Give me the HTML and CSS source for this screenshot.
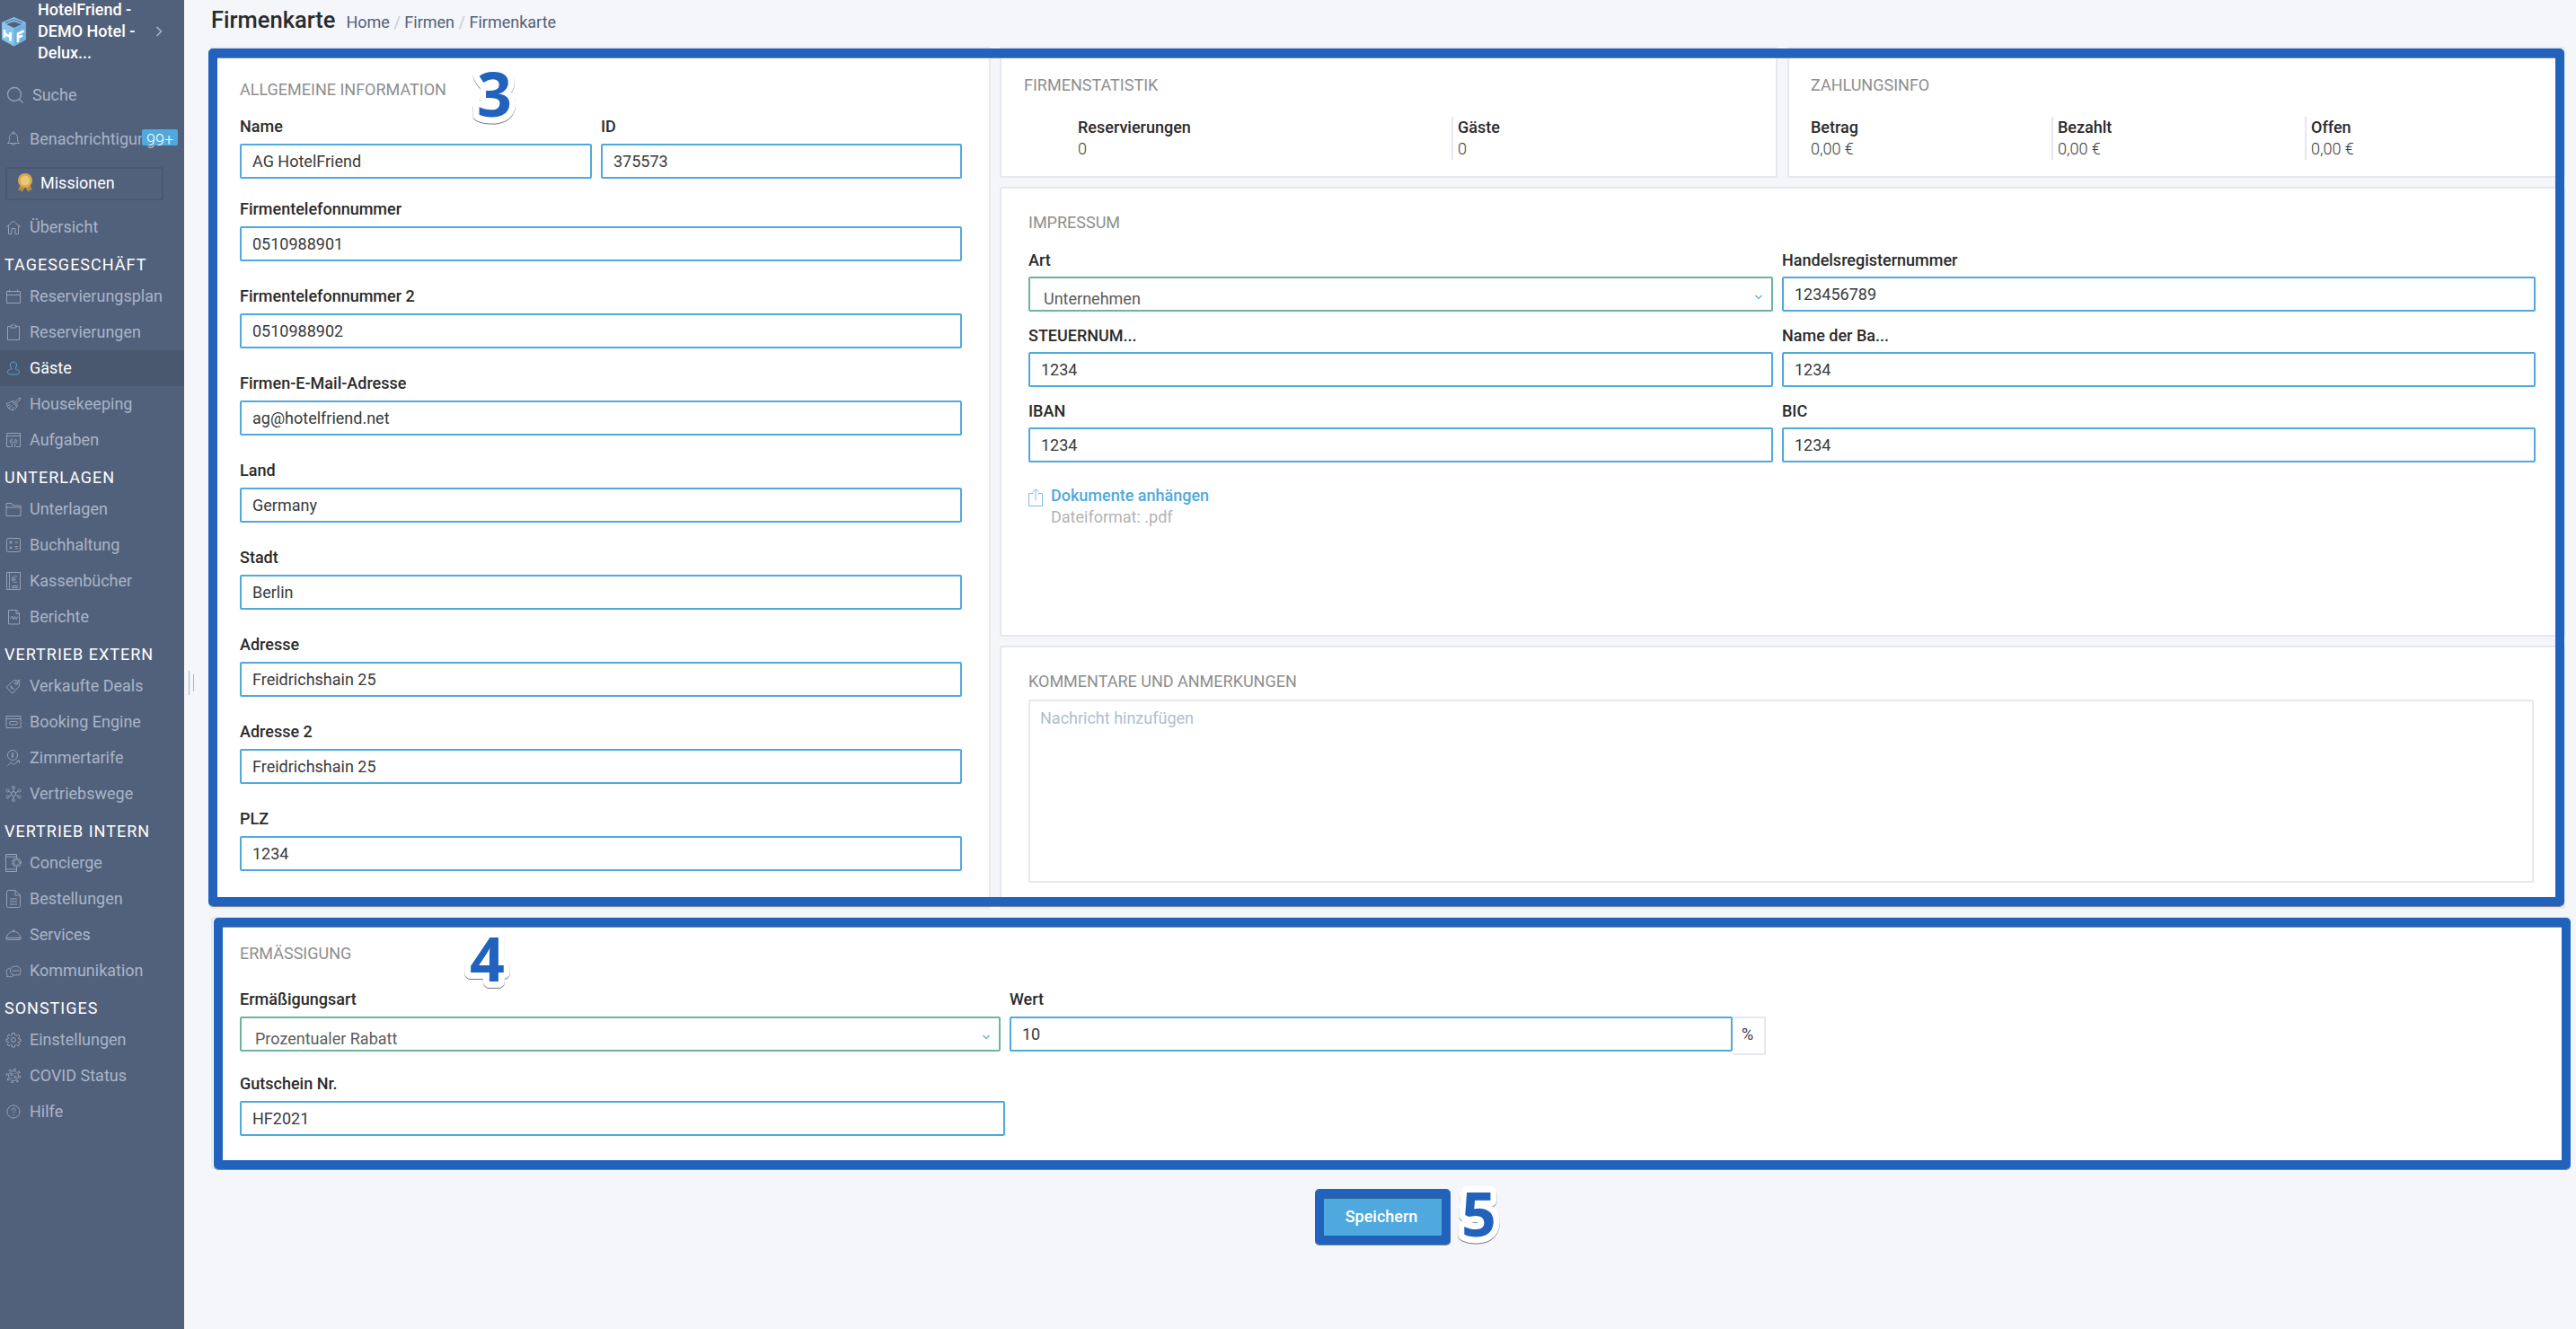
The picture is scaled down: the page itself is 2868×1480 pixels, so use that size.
FILE: index.html
```html
<!DOCTYPE html>
<html lang="de">
<head>
    <meta charset="UTF-8">
    <meta name="viewport" content="width=device-width, initial-scale=1.0">
    <title>Firmenkarte</title>
    <link rel="stylesheet" href="styles.css">
</head>
<body>
<div class="app">
    <!-- Sidebar -->
    <nav class="sidebar">
        <div class="hotel">
            <svg class="logo" width="29" height="33" viewBox="0 0 29 33">
                <path fill="#86c5ee" d="M14.500 0 28 6v19l-13.500 7.500L1 25V6z"/>
                <path fill="#70b2dd" d="M14.500 12.500 28 6v19l-13.500 7.500z"/>
                <path fill="#52617b" d="M14.500 5 23 8l-8.500 4L6 8z"/>
                <path fill="none" stroke="#52617b" d="M5 6.500 14.500 2.500 24 6.500"/>
                <path fill="none" stroke="#fff" stroke-width="2.600" d="M4 14v9M10.500 17v10M4 18.500l6.500 3.500M19 28V18.500l6.500-3M19 23l5-2.500"/>
            </svg>
            <div class="hotel-name">HotelFriend - DEMO Hotel - Delux...</div>
            <svg class="hotel-arrow" width="8" height="12" viewBox="0 0 8 12"><path d="M1.500 1l5 5-5 5"/></svg>
        </div>
        <a class="item search">
            <svg class="ico" viewBox="0 0 20 20"><circle cx="9" cy="9" r="7.500"/><path d="M14.500 14.500l4 4"/></svg>
            Suche
        </a>
        <a class="item notify">
            <svg class="ico" viewBox="0 0 20 20"><path d="M3.500 14.500h13c-2-1.500-2-3-2-6C14.500 5.500 13 3.500 10 3.500S5.500 5.500 5.500 8.500c0 3 0 4.500-2 6zM8.500 3.500c0-2.500 3-2.500 3 0M8 14.500c0 2.500 4 2.500 4 0"/></svg>
            Benachrichtigungen
            <span class="badge">99+</span>
        </a>
        <a class="missions">
            <svg width="18" height="21" viewBox="0 0 18 21">
                <path fill="#b98d45" d="M4 12 1 19l3-.500L5.500 21 9 15l3.500 6 1.500-2.500 3 .500-3-7z"/>
                <circle cx="9" cy="8" r="8" fill="#d9a950"/>
                <circle cx="9" cy="8" r="5.200" fill="#edc873"/>
            </svg>
            Missionen
        </a>
        <a class="item">
            <svg class="ico" viewBox="0 0 20 20"><path d="M2 10l8-7 8 7M4.500 8v9.500h3.500v-6h4v6h3.500V8"/></svg>
            Übersicht
        </a>

        <div class="group">Tagesgeschäft</div>
        <a class="item">
            <svg class="ico" viewBox="0 0 20 20"><path d="M2.500 4.500h15v13h-15zM2.500 8.500h15M5.500 2.500v3M14.500 2.500v3"/></svg>
            Reservierungsplan
        </a>
        <a class="item">
            <svg class="ico" viewBox="0 0 20 20"><path d="M7 3.500H3.500v15h13v-15H13M7 2.500h1.500c0-2 3-2 3 0H13v2.500H7z"/></svg>
            Reservierungen
        </a>
        <a class="item active">
            <svg class="ico" viewBox="0 0 20 20"><path d="M8 10C5.500 8 6 3 10 3s4.500 5 2 7c0 2 4.500 1 4.500 4.500 0 2-2.500 2.500-6.500 2.500s-6.500-.500-6.500-2.500C3.500 11 8 12 8 10z"/></svg>
            Gäste
        </a>
        <a class="item">
            <svg class="ico" viewBox="0 0 20 20"><path d="M9.500 6l5 5M8 7l5.500 5.500M9.500 6C7 8 4.500 9 2.500 9c0 3.500 2 7 6.500 8 2.500-.500 4.500-3 5.500-6M11.500 8l5-5 1.500.500-.500 1.500-4.500 4.500M3.500 12l3-1.500M5 14.500l3.500-3M8 16l2.500-3"/></svg>
            Housekeeping
        </a>
        <a class="item">
            <svg class="ico" viewBox="0 0 20 20"><path d="M7 17.500H2.500v-15h15v15H13M2.500 5.500h15M8.500 18v-3.500C5 13 6 9.500 8 9v3l2 1 2-1V9c2 .500 3 4-.500 5.500V18"/></svg>
            Aufgaben
        </a>

        <div class="group">Unterlagen</div>
        <a class="item">
            <svg class="ico" viewBox="0 0 20 20"><path d="M2 17V3.500h6l1.500 2.500H18v11.500H2zM2 8h16"/></svg>
            Unterlagen
        </a>
        <a class="item">
            <svg class="ico" viewBox="0 0 20 20"><rect x="2.500" y="2.500" width="15" height="15" rx="1"/><path d="M5 7h4M7 5v4M11.500 7H15M5.500 11.500l3 3M8.500 11.500l-3 3M11.500 11.500H15M11.500 14H15"/></svg>
            Buchhaltung
        </a>
        <a class="item">
            <svg class="ico" viewBox="0 0 20 20"><path d="M2.500.500h15v19h-15zM5.500.500v19M14 5c-4-2-5 1-5 3s1.500 5 5 3M8 7h4.500M8 9h4.500M8 15.500h7M8 17.500h7"/></svg>
            Kassenbücher
        </a>
        <a class="item">
            <svg class="ico" viewBox="0 0 20 20"><path d="M4.500 2.500h9l3 3.500v12h-12zM13 2.500V6.500h3.500M6.500 12l2-3 1.500 3.500 1.500-3 1.500 3.500 1.500-3.500"/></svg>
            Berichte
        </a>

        <div class="group">Vertrieb extern</div>
        <a class="item">
            <svg class="ico" viewBox="0 0 20 20"><path d="M10.500 3.500l5.500.500.500 6-7.500 8L2 11.500zM14 6.500l4-4M6 10.500l5 3M8 9.500v4"/><circle cx="13" cy="7" r="1.500"/></svg>
            Verkaufte Deals
        </a>
        <a class="item">
            <svg class="ico" viewBox="0 0 20 20"><path d="M2 3.500h16v13H2zM2 6.500h16"/><rect x="5.500" y="9.500" width="9" height="3.500" rx="1.700"/></svg>
            Booking Engine
        </a>
        <a class="item">
            <svg class="ico" viewBox="0 0 20 20"><circle cx="9" cy="7" r="5.500"/><path d="M10.500 5.500C8 4 7 6.500 9 7s1.500 3-1.500 1.500M9 4v6M3.500 18.500l4-3.500 3 2.500 5.500-4.500M13.500 13H16.500v3"/></svg>
            Zimmertarife
        </a>
        <a class="item">
            <svg class="ico" viewBox="0 0 20 20"><circle cx="10" cy="10" r="2.500"/><circle cx="10" cy="3" r="1.500"/><circle cx="10" cy="17" r="1.500"/><circle cx="3.500" cy="6.500" r="1.500"/><circle cx="16.500" cy="6.500" r="1.500"/><circle cx="3.500" cy="13.500" r="1.500"/><circle cx="16.500" cy="13.500" r="1.500"/><path d="M10 4.500v3M10 12.500v3M5 7.500l3 1.500M12 9l3-1.500M5 12.500l3-1.500M12 11l3 1.500"/></svg>
            Vertriebswege
        </a>

        <div class="group">Vertrieb intern</div>
        <a class="item">
            <svg class="ico" viewBox="0 0 20 20"><path d="M13.500 5V.500h-12v19h12V15M1.500 3h12M1.500 17h12"/><circle cx="13.500" cy="9.500" r="4.700" stroke-width="1.500" stroke-dasharray="2 1"/><circle cx="13.500" cy="9.500" r="3"/></svg>
            Concierge
        </a>
        <a class="item">
            <svg class="ico" viewBox="0 0 20 20"><path d="M4.500.500H12l5.500 5.500v11.500a2 2 0 0 1-2 2h-11a2 2 0 0 1-2-2v-15a2 2 0 0 1 2-2zM12 .500V6h5.500M6 10h8M6 13h8M6 16h8"/></svg>
            Bestellungen
        </a>
        <a class="item">
            <svg class="ico" viewBox="0 0 20 20"><path d="M2.500 13.500C3 4 17 4 17.500 13.500M1.500 13.500h17l-1 2h-15zM9 6V5h2v1"/></svg>
            Services
        </a>
        <a class="item">
            <svg class="ico" viewBox="0 0 20 20"><path d="M17.500 14.500c-8 1.500-11-1-11-4.500s2.500-5 5.500-5 6 1.500 6 5c0 2-1.500 3-.500 4.500zM6 7c-5 1-4 5-3 7l-.500 2.500c4 .500 6 .500 8-1.500M9 10h7"/></svg>
            Kommunikation
        </a>

        <div class="group">Sonstiges</div>
        <a class="item">
            <svg class="ico" viewBox="0 0 20 20"><circle cx="10" cy="10" r="2.500"/><path d="M8.500 2.500h3v2l2 1 1.500-1.500L17 6l-1.500 1.500 .500 1.500h2v3h-2l-1 1.500L17 15l-2 2-1.500-1.500-2 .500v2h-3v-2l-2-.500L5 17l-2-2 1.500-1.500-.500-1.500H2V9h2l.500-1.500L3 6l2-2 1.500 1.500 2-1z"/></svg>
            Einstellungen
        </a>
        <a class="item">
            <svg class="ico" viewBox="0 0 20 20"><circle cx="10" cy="10" r="5.500"/><circle cx="10" cy="10" r="7.500" stroke-width="1.500" stroke-dasharray="2.500 3.400"/><circle cx="8" cy="8.500" r="1.200"/><circle cx="12" cy="11.500" r="1.200"/><path d="M12 7v1M7.500 12l1 .500"/></svg>
            COVID Status
        </a>
        <a class="item">
            <svg class="ico" viewBox="0 0 20 20"><circle cx="10" cy="10" r="7"/><path d="M8 8.500c0-3 4-3 4-.500 0 1.500-2 1.500-2 3.500M10 13v1.200"/></svg>
            Hilfe
        </a>
    </nav>
    <div class="drag"><span></span><span></span></div>

    <main class="main">
        <header class="head">
            <h1>Firmenkarte</h1>
            <div class="crumbs"><a>Home</a><i>/</i><a>Firmen</a><i>/</i><a>Firmenkarte</a></div>
        </header>

        <div class="cards">
            <section class="card general">
                <h2>Allgemeine Information</h2>
                <div class="pair">
                    <div class="field"><label>Name</label><div class="input">AG HotelFriend</div></div>
                    <div class="field"><label>ID</label><div class="input">375573</div></div>
                </div>
                <div class="field"><label>Firmentelefonnummer</label><div class="input">0510988901</div></div>
                <div class="field"><label>Firmentelefonnummer 2</label><div class="input">0510988902</div></div>
                <div class="field"><label>Firmen-E-Mail-Adresse</label><div class="input">ag@hotelfriend.net</div></div>
                <div class="field"><label>Land</label><div class="input">Germany</div></div>
                <div class="field"><label>Stadt</label><div class="input">Berlin</div></div>
                <div class="field"><label>Adresse</label><div class="input">Freidrichshain 25</div></div>
                <div class="field"><label>Adresse 2</label><div class="input">Freidrichshain 25</div></div>
                <div class="field"><label>PLZ</label><div class="input">1234</div></div>
            </section>

            <div class="right">
                <div class="stats">
                    <section class="card stat">
                        <h2>Firmenstatistik</h2>
                        <div class="figures guests">
                            <div><b>Reservierungen</b><span>0</span></div>
                            <div><b>Gäste</b><span>0</span></div>
                        </div>
                    </section>
                    <section class="card stat">
                        <h2>Zahlungsinfo</h2>
                        <div class="figures money">
                            <div><b>Betrag</b><span>0,00 €</span></div>
                            <div><b>Bezahlt</b><span>0,00 €</span></div>
                            <div><b>Offen</b><span>0,00 €</span></div>
                        </div>
                    </section>
                </div>

                <section class="card imprint">
                    <h2>Impressum</h2>
                    <div class="grid">
                        <div class="field">
                            <label>Art</label>
                            <div class="input select">Unternehmen<svg class="caret" viewBox="0 0 10 6"><path d="M1.500 1 5 4.500 8.500 1"/></svg></div>
                        </div>
                        <div class="field"><label>Handelsregisternummer</label><div class="input">123456789</div></div>
                        <div class="field"><label>STEUERNUM...</label><div class="input">1234</div></div>
                        <div class="field"><label>Name der Ba...</label><div class="input">1234</div></div>
                        <div class="field"><label>IBAN</label><div class="input">1234</div></div>
                        <div class="field"><label>BIC</label><div class="input">1234</div></div>
                    </div>
                    <div class="attach">
                        <svg width="16" height="20" viewBox="0 0 16 20"><path d="M5.500 5.500h-5v14h15v-14h-5M8 13.500V1M4.500 4 8 .700 11.500 4"/></svg>
                        <div><b>Dokumente anhängen</b><span>Dateiformat: .pdf</span></div>
                    </div>
                </section>

                <section class="card notes">
                    <h2>Kommentare und Anmerkungen</h2>
                    <div class="textarea">Nachricht hinzufügen</div>
                </section>
            </div>
            <div class="frame frame-top"></div>
            <svg class="num num-3" width="60" height="100"><text x="10" y="72">3</text></svg>
        </div>

        <section class="card discount">
            <h2>Ermässigung</h2>
            <div class="row">
                <div class="field kind">
                    <label>Ermäßigungsart</label>
                    <div class="input select">Prozentualer Rabatt<svg class="caret" viewBox="0 0 10 6"><path d="M1.500 1 5 4.500 8.500 1"/></svg></div>
                </div>
                <div class="field value">
                    <label>Wert</label>
                    <div class="addon"><div class="input">10</div><span>%</span></div>
                </div>
            </div>
            <div class="field voucher"><label>Gutschein Nr.</label><div class="input">HF2021</div></div>
            <div class="frame frame-bottom"></div>
            <svg class="num num-4" width="60" height="100"><text x="10" y="72">4</text></svg>
        </section>

        <div class="actions">
            <button class="save">Speichern</button>
            <svg class="num num-5" width="60" height="100"><text x="10" y="72">5</text></svg>
        </div>
    </main>
</div>
</body>
</html>
```
FILE: styles.css
```css
* {
    box-sizing: border-box;
}
body {
    margin: 0;
    background: #f5f6fa;
    font-family: Roboto, "Liberation Sans", sans-serif;
    font-size: 18px;
    line-height: 24px;
    color: #3a3a3a;
}
.app {
    display: flex;
    height: 1480px;
    overflow: hidden;
}

/* sidebar */
.sidebar {
    width: 205px;
    flex: none;
    background: #52617b;
    color: #a9b5c9;
    overflow: hidden;
}
.hotel {
    display: flex;
    align-items: center;
    height: 70px;
    padding-left: 1px;
    color: #fff;
    font-weight: 500;
}
.logo {
    margin-right: 12px;
}
.hotel-name {
    width: 120px;
}
.hotel-arrow {
    margin-left: 11px;
    fill: none;
    stroke: #a9b5c9;
    stroke-width: 1.5;
}
.item {
    display: flex;
    align-items: center;
    height: 40px;
    padding-left: 5px;
    white-space: nowrap;
    position: relative;
}
.ico {
    width: 20px;
    height: 20px;
    flex: none;
    margin-right: 8px;
    fill: none;
    stroke: #93a1b8;
    stroke-width: 1;
}
.search {
    height: 50px;
    margin-top: 11px;
    padding-left: 7px;
}
.search .ico {
    margin-right: 9px;
    stroke-width: 1.3;
}
.notify {
    height: 48px;
}
.badge {
    position: absolute;
    left: 158px;
    top: 13px;
    width: 40px;
    height: 18px;
    border-radius: 2px;
    background: #4fa9de;
    color: #fff;
    font-weight: 300;
    line-height: 23px;
    text-align: center;
}
.missions {
    display: flex;
    align-items: center;
    width: 176px;
    height: 37px;
    margin: 7px 0 10px 6px;
    padding: 0 0 2px 11px;
    border: 2px solid #4a5870;
    border-radius: 3px;
    color: #fff;
    line-height: 22px;
}
.missions svg {
    margin-right: 8px;
}
.group {
    height: 37px;
    padding: 10px 0 0 5px;
    color: #fff;
    letter-spacing: 1px;
    text-transform: uppercase;
    white-space: nowrap;
}
.active {
    background: #4a586f;
    color: #fff;
}
.active .ico {
    stroke: #4fa9de;
}
.drag {
    display: flex;
    flex: none;
    align-items: center;
    gap: 4px;
    width: 6px;
    height: 27px;
    margin: 747px -11px 0 5px;
}
.drag span {
    width: 1px;
    height: 27px;
    background: #a9b5c9;
}
.drag span + span {
    height: 19px;
}

/* page head */
.main {
    flex: 1;
    padding-left: 29px;
}
.head {
    display: flex;
    align-items: baseline;
    height: 52px;
    padding: 6px 0 0 1px;
}
h1 {
    margin: 0 12px 0 0;
    font-size: 25.5px;
    line-height: 32px;
    font-weight: 500;
    color: #2b2b2b;
}
.crumbs {
    color: #52617b;
}
.crumbs i {
    margin: 0 4.5px;
    font-style: normal;
    color: #c6c9cf;
}

/* cards */
.card {
    background: #fff;
    border: 2px solid #e5e8ee;
    border-radius: 2px;
}
h2 {
    margin: 0;
    font-size: 18px;
    line-height: 24px;
    font-weight: 400;
    color: #8e8e8e;
    text-transform: uppercase;
}
.cards {
    display: flex;
    gap: 10px;
    height: 960px;
    position: relative;
}
.general {
    width: 869px;
    padding: 34px 30px 0 31px;
}
.right {
    flex: 1;
    display: flex;
    flex-direction: column;
    gap: 10px;
    margin-right: 14px;
}
.stats {
    display: flex;
    gap: 11px;
    height: 146px;
}
.stat {
    width: 866px;
    flex: none;
    padding: 29px 0 0 25px;
}
.stat + .stat {
    flex: 1;
    padding-left: 24px;
}
.figures {
    display: flex;
    height: 48px;
    margin-top: 23px;
}
.figures div {
    width: 282px;
    flex: none;
}
.figures div + div {
    padding-left: 5px;
    border-left: 2px solid #e5e8ee;
}
.figures.guests {
    padding-left: 60px;
}
.guests div:first-child {
    width: 416px;
}
.money div:first-child {
    width: 268px;
}
.figures b,
.figures span {
    display: block;
}
.figures b,
label {
    font-weight: 500;
    color: #2b2b2b;
}
.figures span {
    font-weight: 300;
}

/* form fields */
.field {
    display: flex;
    flex-direction: column;
    gap: 7px;
}
label {
    display: block;
    height: 24px;
    white-space: nowrap;
}
.imprint label {
    position: relative;
    top: 1px;
}
.input {
    height: 39px;
    padding: 0 12px;
    border: 2px solid #4fa9de;
    border-radius: 2px;
    background: #fff;
    line-height: 35px;
}
.select {
    position: relative;
    padding: 5px 0 0 15px;
    border-color: #6cb49c;
    line-height: 35px;
    color: #5c5c5c;
}
.caret {
    position: absolute;
    right: 9px;
    top: 18px;
    width: 10px;
    height: 6px;
    fill: none;
    stroke: #4fa9de;
    stroke-width: 1.2;
}
.pair {
    display: flex;
    gap: 10px;
    margin: 17px 0 22px;
}
.pair .field {
    flex: 1;
}
.pair .field:first-child {
    flex: none;
    width: 392px;
}
.general > .field {
    margin-bottom: 27px;
}
.imprint {
    height: 501px;
    padding: 26px 30px;
}
.grid {
    display: grid;
    grid-template-columns: 829px 839px;
    gap: 14px 10px;
    margin-top: 17px;
}
.attach {
    display: flex;
    gap: 9px;
    margin-top: 25px;
}
.attach svg {
    margin-top: 4px;
    fill: none;
    stroke: #7cc0e8;
}
.attach b,
.attach span {
    display: block;
}
.attach b {
    font-weight: 500;
    color: #4fa9de;
}
.attach span {
    color: #b3b3b3;
}
.notes {
    flex: 1;
    padding: 26px 32px 0 30px;
}
.textarea {
    width: 1676px;
    height: 204px;
    margin-top: 8px;
    padding: 7px 11px;
    border: 2px solid #e5e8ee;
    border-radius: 2px;
    color: #b1bdd1;
}

/* discount */
.discount {
    position: relative;
    width: 2626px;
    height: 281px;
    margin: 9px 0 0 1px;
    padding: 27px 0 0 30px;
}
.row {
    display: flex;
    gap: 10px;
    margin: 27px 0 24px;
}
.kind {
    width: 847px;
}
.value {
    width: 842px;
}
.addon {
    display: flex;
    height: 43px;
}
.addon .input {
    width: 805px;
}
.addon span {
    flex: 1;
    border: 2px solid #e5e8ee;
    border-left: 0;
    line-height: 36px;
    padding-left: 10px;
}
.voucher {
    width: 852px;
    margin-top: -4px;
}

.actions {
    display: flex;
    position: relative;
    padding: 22px 0 0 1230px;
}
.save {
    width: 151px;
    height: 62px;
    padding: 0 3px 1px 0;
    border: 10px solid #2162bd;
    border-radius: 5px;
    background: #4fa9de;
    box-shadow: 0 1px 0 #80858f, inset 0 1px 0 #2f6484;
    color: #fff;
    font: 500 18px/40px Roboto, sans-serif;
}

/* marker frames and numbers */
.frame {
    position: absolute;
    border: 10px solid #2162bd;
    border-radius: 5px;
    box-shadow: 0 1px 0 #80858f, inset 0 1px 0 #80858f;
}
.frame-top {
    left: -2px;
    top: 2px;
    width: 2623px;
    height: 955px;
}
.frame-bottom {
    left: 1px;
    top: -1px;
    width: 2624px;
    height: 280px;
}
.num {
    position: absolute;
    overflow: visible;
    filter: drop-shadow(0 1px 0.5px #777);
}
.num text {
    font: 700 68px "Noto Sans", "Open Sans", sans-serif;
    fill: #2162bd;
    stroke: #fff;
    stroke-width: 14px;
    stroke-linejoin: round;
    paint-order: stroke;
}
.num-3 {
    left: 287px;
    top: 6px;
}
.num-4 {
    left: 276px;
    top: -2px;
}
.num-5 {
    left: 1383px;
    top: 3px;
}
```
